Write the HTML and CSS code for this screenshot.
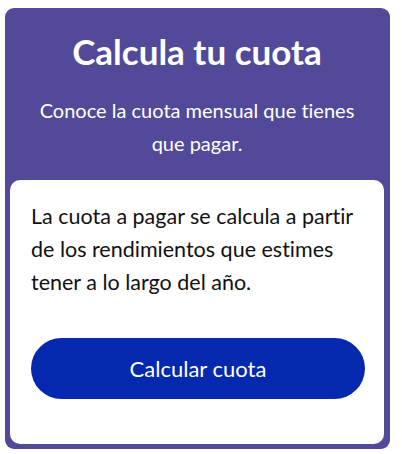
FILE: index.html
```html
<!DOCTYPE html>
<html lang="es">
<head>
<meta charset="utf-8">
<link rel="stylesheet" href="styles.css">
</head>
<body>
<div class="card">
  <div class="card-header">
    <h1 class="title">Calcula tu cuota</h1>
    <p class="subtitle">Conoce la cuota mensual que tienes que pagar.</p>
  </div>
  <div class="card-body">
    <p class="text">La cuota a pagar se calcula a partir de los rendimientos que estimes tener a lo largo del año.</p>
    <button class="btn">Calcular cuota</button>
  </div>
</div>
</body>
</html>
```
FILE: styles.css
```css
html, body {
  margin: 0;
  padding: 0;
  background: #ffffff;
}
body {
  font-family: Lato, "Open Sans", sans-serif;
  font-variant-ligatures: none;
}
.card {
  margin: 8px 0 0 5px;
  width: 385px;
  box-sizing: border-box;
  background: #524a99;
  border-radius: 9px;
  padding: 0 6px 5px 5px;
  display: flex;
  flex-direction: column;
}
.card-header {
  padding: 24px 10px 20px;
  text-align: center;
  color: #ffffff;
}
.title {
  margin: 0;
  font-size: 35px;
  line-height: 38px;
  font-weight: 700;
}
.subtitle {
  margin: 24px 0 0;
  font-size: 20px;
  line-height: 33px;
  font-weight: 400;
  padding: 0 16px;
}
.card-body {
  background: #ffffff;
  border-radius: 10px;
  padding: 20px 19px 45px 21px;
  display: flex;
  flex-direction: column;
}
.text {
  margin: 0;
  font-size: 21.5px;
  line-height: 33px;
  color: #111111;
}
.btn {
  margin-top: 39px;
  height: 61px;
  border: none;
  border-radius: 31px;
  background: #0529ae;
  color: #ffffff;
  font-family: Lato, "Open Sans", sans-serif;
  font-size: 22px;
  width: 334px;
  cursor: pointer;
}
```
